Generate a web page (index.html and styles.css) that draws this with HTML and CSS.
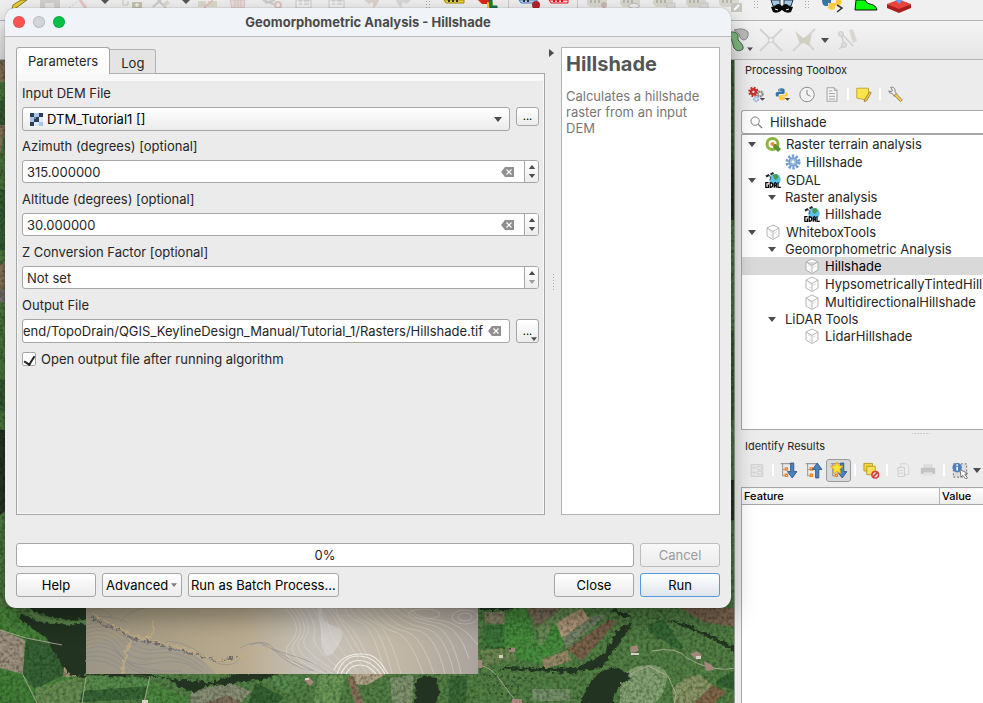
FILE: index.html
```html
<!DOCTYPE html>
<html lang="en">
<head>
<meta charset="utf-8">
<title>Geomorphometric Analysis - Hillshade</title>
<link rel="stylesheet" href="styles.css">
</head>
<body>
<svg class="defs" aria-hidden="true">
  <defs>
    <symbol id="down" viewBox="0 0 8 5"><path d="M0 0h8L4 5z" fill="#4c4c4c"/></symbol>
    <symbol id="up" viewBox="0 0 8 5"><path d="M0 5h8L4 0z" fill="#4c4c4c"/></symbol>
    <symbol id="clear" viewBox="0 0 13 10"><path d="M4 0h9v10H4L0 5z" fill="#8f8f8f"/><path d="M5.500 2.500l5 5m0-5l-5 5" stroke="#fff" stroke-width="1.200"/></symbol>
    <symbol id="cube" viewBox="0 0 16 16"><path d="M8 1l6 3v8l-6 3.500L2 12V4zM2 4l6 3.500L14 4M8 7.500v7" fill="#fff" stroke="#a2a2a2" stroke-width=".8"/><path d="M4 6.500l3 2m2 1l3-2m-6 3v2" fill="none" stroke="#ccc" stroke-width=".7"/></symbol>
    <symbol id="gdal" viewBox="0 0 16 16"><circle cx="10" cy="7.500" r="5.700" fill="#5bc4ee"/><path d="M8 3l4-1 2 3-3 3-2-1z" fill="#4d9a4a"/><path d="M1 4.500l3-1.500M5.500 2.500L8.500.8" stroke="#222" stroke-width="2"/><path d="M4 3l2 3-1 2" fill="none" stroke="#555"/><path d="M3.500 10.700H.8v4.600h2.700v-2.300h-1M5.200 10.700v4.600q2.600 0 2.600-2.300t-2.600-2.300zM9.300 15.800v-4.200l1-1 1 1v4.200M9.300 13.700h2M13 10.200v5.100h2.800" fill="none" stroke="#000" stroke-width="1.200"/></symbol>
    <symbol id="gear" viewBox="0 0 16 16"><circle cx="8" cy="8" r="6" fill="none" stroke="#6f9bd0" stroke-width="3" stroke-dasharray="2.300 1.470"/><circle cx="8" cy="8" r="4" fill="#9bbce4" stroke="#6f9bd0" stroke-width="1.500"/><circle cx="8" cy="8" r="1.400" fill="#fff"/></symbol>
    <symbol id="python" viewBox="0 0 16 16"><path d="M8 1c-3 0-4 1-4 2.500V5h4.500v.7H3C1.500 5.700 1 7 1 8.500S1.700 11 3 11h1.500V9.500Q4.500 8 6 8h4q1.700 0 1.700-1.700V3.500Q11.700 1 8 1z" fill="#3873a8"/><path d="M8.500 15.500c3 0 3.700-1 3.700-2.500v-1.500H8v-.7h5.500c1.500 0 2-1.300 2-2.600S15 5.800 13.500 5.800h-1V7.500q0 1.500-1.500 1.500H7Q5 9 5 11v2q0 2.500 3.500 2.500z" fill="#fdcb3c"/><circle cx="6" cy="3" r=".8" fill="#fff"/></symbol>
    <symbol id="arrowdown" viewBox="0 0 16 16"><path d="M9.500 1h3v8h3L11 15 6.500 9h3z" fill="#4d83bd" stroke="#275484" stroke-width=".8"/></symbol>
    <symbol id="arrowup" viewBox="0 0 16 16"><path d="M9.500 15h3V7h3L11 1 6.500 7h3z" fill="#4d83bd" stroke="#275484" stroke-width=".8"/></symbol>
    <symbol id="twig" viewBox="0 0 16 16"><path d="M0 1.500h12M2 2v11h2M2 7h2" fill="none" stroke="#999"/><path d="M4.500 5.500h2v2h-2zM4.500 11.500h2v2h-2z" fill="#fff" stroke="#f58220" stroke-width="1.300"/></symbol>
    <symbol id="fadedlabel" viewBox="0 0 24 14"><path d="M0 0h20v4l-3 3H3L0 4z" fill="#dbdad0"/><path d="M4 0v3m4-3v3m4-3v3" stroke="#b9b8ae" stroke-width="2"/></symbol>
    <symbol id="fadeddoc" viewBox="0 0 24 14"><path d="M4 0h15v8H4z" fill="#f1f1f1" stroke="#ccc"/><path d="M7 1h3m2 0h5M7 4h3m2 0h5" stroke="#c5c5c5"/></symbol>
  </defs>
</svg>
<div class="app">
  <div class="bar bar-top">
    <span class="slot"><svg class="cut" viewBox="0 0 24 14"><path d="M16 0h6L11 8l-4 1 1-4z" fill="#e9cf31" stroke="#8a7a2d"/></svg></span>
    <span class="slot"><svg class="cut" viewBox="0 0 24 14"><path d="M2 0h20v8H2z" fill="#d2d0ce"/><path d="M7 3h9v5H7z" fill="#e7e5e3"/></svg></span>
    <span class="slot mid"><svg class="cut" viewBox="0 0 24 14"><path d="M2 8L12 0" stroke="#ccc" stroke-dasharray="2 2"/><path d="M13 0l6 8" stroke="#e5c9c5" stroke-width="3"/></svg></span>
    <span class="slot mid"><svg class="cut" viewBox="0 0 24 14"><path d="M8 0h8l-4 4z" fill="#555"/></svg></span>
    <span class="slot mid"><svg class="cut" viewBox="0 0 24 14"><path d="M4 0v5h5V1" fill="#eee" stroke="#c9c9c0"/><rect x="13" y="2" width="10" height="7" fill="#c5c3ac"/><path d="M16 5h4m-2-2v4" stroke="#fff"/></svg></span>
    <span class="slot"><svg class="cut" viewBox="0 0 24 14"><path d="M4 7L12 0m-3 0l8 8" stroke="#ccc" stroke-width="2"/><path d="M13 4l5-4 3 3-5 4z" fill="#dddbcf"/></svg></span>
    <span class="slot small"><svg class="cut" viewBox="0 0 24 14"><path d="M8 0h8l-4 4z" fill="#555"/></svg></span>
    <span class="slot mid"><svg class="cut" viewBox="0 0 24 14"><path d="M2 1h8v6H2zm10 0h9v6h-9z" fill="#dcdacb"/><path d="M8 8l9-8" stroke="#e0c0bb" stroke-width="2"/></svg></span>
    <span class="slot"><svg class="cut" viewBox="0 0 24 14"><path d="M4 0h15l-1 8H6z" fill="#ecdedb" stroke="#dac8c5"/><path d="M9 0v7m3-7v7m3-7v7" stroke="#dac3c0"/></svg></span>
    <span class="slot"><svg class="cut" viewBox="0 0 24 14"><path d="M4 0l13 5M16 0L6 3" stroke="#ccc" stroke-width="2"/><circle cx="19" cy="5" r="3" fill="none" stroke="#dfc6c2" stroke-width="2"/></svg></span>
    <span class="slot"><svg class="cut"><use href="#fadeddoc"/></svg></span>
    <span class="slot"><svg class="cut"><use href="#fadeddoc"/></svg></span>
    <span class="slot"><svg class="cut" viewBox="0 0 24 14"><path d="M6 0h15q-1 5-6 8 1-4-1-6l-3 2z" fill="#dcd3ce"/></svg></span>
    <span class="slot"><svg class="cut" viewBox="0 0 24 14"><path d="M20 0H5q1 5 6 8-1-4 1-6l3 2z" fill="#d8d9d4"/></svg></span>
    <span class="slot small"><i class="grip"></i></span>
    <span class="slot"><svg class="cut" viewBox="0 0 24 14"><path d="M2 0h20v3H4z" fill="#f6d92a" stroke="#a08a18"/><path d="M7 0v2m4-2v2m4-2v2" stroke="#333" stroke-width="2"/></svg></span>
    <span class="slot"><svg class="cut" viewBox="0 0 24 14"><path d="M3 0h11v4H7z" fill="#e12619"/><path d="M12 2h6v7h-6z" fill="#f6cf25"/><path d="M14 0h3v6h5v2h-7z" fill="#138c43" stroke="#165"/></svg></span>
    <span class="sep"></span>
    <span class="slot"><svg class="cut" viewBox="0 0 24 14"><path d="M1 0h18v3H3z" fill="#b5d4f4" stroke="#4b82bd"/><path d="M6 0v2m4-2v2" stroke="#333" stroke-width="2"/><circle cx="18" cy="5" r="4" fill="#b0252b"/></svg></span>
    <span class="slot mid"><svg class="cut" viewBox="0 0 24 14"><path d="M2 0h19v3H4z" fill="#fdd" stroke="#e12"/><path d="M7 0v2m4-2v2m4-2v2" stroke="#e12" stroke-width="2"/></svg></span>
    <span class="sep"></span>
    <span class="slot"><svg class="cut"><use href="#fadedlabel"/><circle cx="17" cy="5" r="3" fill="#cdb8b5"/></svg></span>
    <span class="slot"><svg class="cut"><use href="#fadedlabel"/><path d="M8 6q6-6 12 0-6 5-12 0z" fill="#eee" stroke="#bbb"/></svg></span>
    <span class="slot"><svg class="cut"><use href="#fadedlabel"/><path d="M14 3h8v6h-8z" fill="#ddd" stroke="#ccc"/></svg></span>
    <span class="slot"><svg class="cut"><use href="#fadedlabel"/><path d="M14 3h8v6h-8z" fill="#ddd" stroke="#ccc"/></svg></span>
    <span class="slot"><svg class="cut"><use href="#fadedlabel"/><path d="M12 3h11v9H12z" fill="#c8c7c0"/><path d="M15 10l5-5" stroke="#fff" stroke-width="2"/></svg></span>
    <span class="slot small"><i class="grip"></i></span>
    <span class="slot"><svg class="cut" viewBox="0 0 24 14"><path d="M1 0h9v6H3zm13 0h9l-2 6h-7z" fill="#a5c6e3" stroke="#26333f"/><path d="M12 6q4-4 7 0l4 1-2 5q-5 2-9-2-4 4-9 2L1 7l4-1q3-4 7 0z" fill="#090909"/><path d="M5 9l3 1m8 0l3-1" stroke="#fff"/></svg></span>
    <span class="slot small"><i class="grip"></i></span>
    <span class="slot"><svg class="cut" viewBox="0 0 24 14"><path d="M1 0h9v3H7v3H4Q1 5 1 0z" fill="#3873a8"/><path d="M8 3h7V0h5q2 3-1 5h-5v4q-5 2-7-1z" fill="#fdcb3c"/><path d="M16 5l5 3-5 4" fill="none" stroke="#333" stroke-width="1.500"/></svg></span>
    <span class="slot"><svg class="cut" viewBox="0 0 24 14"><path d="M2 0h9q2 4 5 4 6 1 7 6H1z" fill="#0f0" stroke="#111"/></svg></span>
    <span class="slot"><svg class="cut" viewBox="0 0 24 14"><path d="M0 4l12 4 12-4v4l-12 5L0 8z" fill="#a91f1c"/><path d="M0 4l8-3h8l8 3-12 5z" fill="#e8443c"/><path d="M8 0h8l-4 4z" fill="#6f9be6"/></svg></span>
  </div>
  <div class="bar bar-edit">
    <span class="slot"><svg class="tool" viewBox="0 0 24 24"><path d="M8 2q10-3 14 2 1 8-5 8-4-2-4-6z" fill="#b9bbb9" stroke="#888"/><path d="M2 5Q9 2 12 7l0 5q6 5 5 9-5 4-9-1L6 13z" fill="#84b984" stroke="#3f6b43"/></svg><svg class="corner" viewBox="0 0 8 5"><use href="#down"/></svg></span>
    <span class="slot"><svg class="tool" viewBox="0 0 24 24"><path d="M1 1l22 22M23 1L1 23" stroke="#d3d3d3" stroke-width="2"/><circle cx="12" cy="12" r="2.500" fill="#eee" stroke="#ccc"/></svg></span>
    <span class="slot"><svg class="tool" viewBox="0 0 24 24"><path d="M1 23L23 1M14 13l8 9" stroke="#d5d5d2" stroke-width="2"/><path d="M3 3l8 7 9-4-3 12-5-3-4 1z" fill="#d0cfc2"/></svg></span>
    <span class="slot arrow"><svg class="tri" viewBox="0 0 8 5"><use href="#down"/></svg></span>
    <span class="slot"><svg class="tool" viewBox="0 0 24 24"><path d="M4 21L9 17 6 5l12 13" fill="none" stroke="#d0d0d0" stroke-width="1.500"/><circle cx="6" cy="6" r="2.500" fill="#ddd" stroke="#ccc"/><circle cx="9" cy="17" r="2.500" fill="#ddd" stroke="#ccc"/><path d="M14 2l4-1 4 12-4 2z" fill="#d9d8ce"/></svg></span>
  </div>
  <div class="workspace">
    <div class="map">
      <svg viewBox="0 60 734 643" preserveAspectRatio="xMidYMax slice" role="img" aria-label="Aerial map with terrain overlay">
        <defs>
          <filter id="grain" x="0" y="0" width="1" height="1" color-interpolation-filters="sRGB"><feTurbulence type="fractalNoise" baseFrequency=".3" numOctaves="3" seed="4" result="n"/><feColorMatrix in="n" values="0 0 0 0 0  0 0 0 0 .05  0 0 0 0 0  .8 0 0 0 -.3"/><feComposite in2="SourceGraphic" operator="in" result="g"/><feMerge><feMergeNode in="SourceGraphic"/><feMergeNode in="g"/></feMerge></filter>
          <filter id="rough" color-interpolation-filters="sRGB"><feTurbulence type="fractalNoise" baseFrequency=".22" numOctaves="2" seed="8"/><feDisplacementMap in="SourceGraphic" scale="7" xChannelSelector="R" yChannelSelector="G"/></filter>
          <linearGradient id="dtm"><stop offset="0" stop-color="#a0967f"/><stop offset=".4" stop-color="#b9ab8f"/><stop offset=".58" stop-color="#c6c2bb"/><stop offset=".78" stop-color="#c3b9a8"/><stop offset="1" stop-color="#aaa39c"/></linearGradient>
          <clipPath id="dtmclip"><path d="M86 590h392v84H86z"/></clipPath>
        </defs>
        <g filter="url(#grain)">
          <path d="M0 60h734v643H0z" fill="#537f45"/>
          <path d="M0 60h6v22H0zM0 125h6l-6 30zM0 265l6-5v25l-6 8z" fill="#8d7b60"/>
          <path d="M0 100h6v25H0zM0 190h6v60H0zM0 380h6v30H0z" fill="#3d6638"/>
          <path d="M0 290h6v12H0z" fill="#817a75"/>
          <path d="M0 430h6v80l-6 5z" fill="#2a3a27"/>
          <path d="M0 608h16l10 15 40 18 18 33-35 14-14 15H0z" fill="#4b873d"/>
          <path d="M0 630l25 10-2 34-23-6z" fill="#a09281"/>
          <path d="M26 638l36 7 3 30-31 14-11-15z" fill="#386336"/>
          <path d="M65 658l18 18-20 1z" fill="#a59a76"/>
          <path d="M0 670l23 5 13 28H0z" fill="#437f38"/>
          <path d="M35 688l48-12-2 27H36z" fill="#678c51"/>
          <path d="M87 676l62 2-4 12-63 8z" fill="#578b4b"/>
          <path d="M82 691l66-5-4 13-64 3z" fill="#386635"/>
          <path d="M148 680l18 10 24 8-6 5h-40z" fill="#4c883f"/>
          <path d="M192 690l40-7 20 9-12 11h-50z" fill="#888e73"/>
          <path d="M205 703l22-8 15 8z" fill="#7c6d59"/>
          <path d="M256 683l28 14-6 6h-30z" fill="#356232"/>
          <path d="M262 676l38 0-10 18z" fill="#5a8b50"/>
          <path d="M318 675h29l-9 28h-24z" fill="#6b9757"/>
          <path d="M350 674l36 0-19 11-15-1z" fill="#b2a388"/>
          <path d="M347 678l6-2 11 27h-9z" fill="#887157"/>
          <path d="M390 678l24-3-2 28h-20z" fill="#7f936d"/>
          <path d="M450 676h17l-1 27h-18z" fill="#3a6735"/>
          <path d="M485 612h20l-1 12-19-1z" fill="#8c866c"/>
          <path d="M484 625h21v25l-25 5z" fill="#3e773a"/>
          <path d="M506 611l20-3 10 37-32 6z" fill="#488e3e"/>
          <path d="M526 608h35l-24 19z" fill="#7e705b"/>
          <path d="M537 627l23-17 4-2h15l-27 36-13 1z" fill="#6b8d57"/>
          <path d="M515 650l29-6 10-22 12 20-22 22-28-4z" fill="#488e3e"/>
          <path d="M556 623l26-15 10 15-30 15z" fill="#b59b7d"/>
          <path d="M562 638l31-22 15-2-42 35z" fill="#78876a"/>
          <path d="M608 620l10 0-36 41-15-12z" fill="#7a624b"/>
          <path d="M542 659l26-9 3 11-27 8z" fill="#968a69"/>
          <path d="M480 650l34-3v12l-30 8z" fill="#6c8651"/>
          <path d="M532 689h38v12h-38z" fill="#748f67"/>
          <path d="M648 625l15-6 20 28-3 3-32-18z" fill="#386a37"/>
          <path d="M620 678l12-10q26-8 35 5 0 20-12 30h-35z" fill="#85a272"/>
          <path d="M672 690q10-14 28-15l13 11-14 17h-25z" fill="#899666"/>
          <path d="M694 703l18-18 14 7-12 11z" fill="#806649"/>
          <path d="M717 680l17-9v19l-18-5z" fill="#356333"/>
          <path d="M680 608h54v19l-30-5z" fill="#7f6853"/>
          <path d="M730 60h4v100h-4zM730 330h4v90h-4z" fill="#3f6438"/>
          <path d="M730 160h4v60h-4zM730 480h4v40h-4z" fill="#2b3a26"/>
        </g>
        <path d="M30 612q18 14 56 10" fill="none" stroke="#5b844a" stroke-width="3"/>
        <g filter="url(#rough)" fill="#223321">
          <path d="M14 600h74v18q-30 5-52-6zM18 611q24 18 68 12v56l-19-6-20-34-24-17z"/>
          <path d="M83 672h62l18 6 22 2 28 3 25-10h40l-10 5-32 5-30 3-12 7-15-6-15-10-61-1z"/>
          <path d="M416 680q11-8 21 0l2 16-6 9h-18zM580 703q10-24 26-34 14-4 26 9-18 8-20 28z"/>
          <path d="M480 606h38l-10 4h-28z"/>
          <path d="M612 608l22 9 30 2 20 7 30 14 20 12v-5l-24-12-24-11-28-6-38-1-8-9zM577 668l26-14 17-27 13-4-21 30-10 14-28 6-40-2-33-2v-2l36 1z"/>
        </g>
        <path d="M0 630l26 8 36 7m-39 30l14 28m49-26l-4 26m68-27l-6 27M478 665q14 2 22 15l17 23m113-29l18-8 20 10 8 18-4 19m-20-62q25-5 35 7 25 15 50 10l10 10" fill="none" stroke="#b6b39d" stroke-width=".8"/>
        <g fill="#a08779"><path d="M509 648h6v4h-6zM478 660h4v8h-4zM630 647l7-2 2 6-8 2zM690 654l7-3 5 4-5 5zM704 661l8 4 2 5-8 1zM304 680l5-3 5 5-4 4zM512 699h10v4h-10z"/></g>
        <g fill="#d7d0c8"><path d="M499 655h4v3h-4zM631 653h8v2h-8zM696 656h5v3h-5zM305 678h4v2h-4zM142 700h6v3h-6z"/></g>
        <path d="M485 647l28 2m-30 26l52 4m-48 6l34 2m-32 6l26 2" fill="none" stroke="#2c452a" stroke-width="1.500" stroke-dasharray="2 4"/>
        <g clip-path="url(#dtmclip)">
          <path d="M86 590h392v84H86z" fill="url(#dtm)"/>
          <path d="M86 650q30-22 75-5 40 8 55 29H86z" fill="#9a968d" opacity=".5"/>
          <g fill="none" stroke="#858588" stroke-width=".5">
            <path d="M86 625q22-8 40 8t35 10 42 12 37 3M86 629q22-8 38 8t36 12 45 14M86 633q22-8 36 8t36 12 45 15M86 637q22-8 34 9t37 12 45 14M86 641q22-8 32 10t38 12 42 8M86 645q22-8 34 10t62 16M86 649q22-8 38 10t62 15M86 653q22-6 38 10t50 12M86 657q22-5 42 14M86 661q20-4 38 12M88 618q22-5 40 5M88 611q15-5 24 5M120 622q10-12 25-14M240 648q20-12 35 3t36 20M250 645q15-6 22 2t42 24M262 645q20 8 35 12t30 15"/>
          </g>
          <g fill="none" stroke="#e4e1d9" stroke-width=".6" opacity=".75">
            <path d="M285 608q20 20 5 35t27 31M290 608q18 20 5 34t31 32M295 608q16 20 5 32t33 34M300 608q14 20 5 30t36 36M306 608q12 18 8 28t32 38M313 608q10 16 9 26t31 40M320 608q8 12 9 20t30 46M327 608q8 10 12 18t28 48M331 608q6 8 12 16t30 50M336 608q0 8 10 15t30 51M345 608q2 10 15 14t25 52M350 608q5 10 18 15t24 51M357 608q8 10 20 16t24 50M365 608q15 20 30 24t28 42M372 608q15 20 32 23t30 43M380 608q15 20 35 22t30 44M388 608q15 16 36 20t30 46M395 608q15 14 36 17t30 49M403 608q12 12 34 15t32 36M410 608q5 10 28 12t40 25"/>
            <ellipse cx="465" cy="617" rx="7" ry="4"/><ellipse cx="465" cy="617" rx="13" ry="7"/><ellipse cx="424" cy="614" rx="16" ry="5"/>
          </g>
          <path d="M337 674q8-24 32-16 9 4 16 16M341 674q8-18 26-12 7 3 14 12M346 674q6-12 20-8 5 2 10 8M334 670q10-20 36-15 9 3 18 19" fill="none" stroke="#edebe5" stroke-width="1.200"/>
          <path d="M322 608q-2 14 12 18t4 20-14 6-3-14-4-30z" fill="#e2e1df" opacity=".45"/>
          <g fill="none" filter="url(#rough)">
            <path d="M92 617l12 8 14 4 13 10 25 4 18 7 28 6 18 5 18-4" stroke="#6f6b6b" stroke-width="2" stroke-dasharray="4 1 6 3"/>
            <path d="M131 640q-8 18-8 36" stroke="#b9a781" stroke-width="3"/>
            <path d="M133 637q45 8 70 18t38 2 30-10M93 614q24 15 45 22t14-16" stroke="#c6af83" stroke-width="1.200"/>
          </g>
        </g>
      </svg>
    </div>
    <aside class="dock">
      <section class="toolbox">
        <h2 class="dock-title">Processing Toolbox</h2>
        <div class="icons">
          <button class="ib" aria-label="Models"><svg viewBox="0 0 20 18"><circle cx="6" cy="6" r="4.500" fill="none" stroke="#c9302c" stroke-width="2.500" stroke-dasharray="2 1.500"/><circle cx="6" cy="6" r="2.700" fill="none" stroke="#c9302c" stroke-width="2.800"/><circle cx="13.500" cy="8.500" r="2.700" fill="#eee" stroke="#888" stroke-width="2.500" stroke-dasharray="2 .6"/><circle cx="9" cy="14" r="2.300" fill="#eee" stroke="#9cb7dd" stroke-width="2.500" stroke-dasharray="2 .6"/><path d="M13 13h6l-3 3z" fill="#4c4c4c"/></svg></button>
          <button class="ib" aria-label="Scripts"><svg viewBox="0 0 20 18"><use href="#python" x="2" y="1" width="15" height="15"/><path d="M13 13h6l-3 3z" fill="#4c4c4c"/></svg></button>
          <button class="ib" aria-label="History"><svg viewBox="0 0 20 18"><circle cx="10" cy="9" r="8" fill="#f3f3f3" stroke="#808080"/><path d="M10 4v5l4 2" fill="none" stroke="#777"/></svg></button>
          <button class="ib" aria-label="Results"><svg viewBox="0 0 20 18"><path d="M4.500 1.500h8l3 3v12h-11z" fill="#f7f7f7" stroke="#999"/><path d="M12.500 1.500v3h3M6.500 5h4m-4 3h7m-7 3h7m-7 3h7" fill="none" stroke="#999"/></svg></button>
          <span class="split"></span>
          <button class="ib" aria-label="Edit in place"><svg viewBox="0 0 20 18"><path d="M2 2h13v10l-3 3-10-2z" fill="#fbe44c" stroke="#bda22c"/><path d="M16 6l2 1-5 9-3 1 1-3z" fill="#efc13e" stroke="#7d6a38" stroke-width=".7"/></svg></button>
          <span class="split"></span>
          <button class="ib" aria-label="Options"><svg viewBox="0 0 20 18"><path d="M2 5l3 1 1-2-2-3q4-1 5 3v2l2 2-3 3-2-3q-4 0-4-3z" fill="#eee" stroke="#777"/><path d="M10 8l7 7-2 2-7-7z" fill="#f1cc5b" stroke="#9b7d33"/></svg></button>
        </div>
        <label class="search"><svg viewBox="0 0 14 14"><circle cx="5.500" cy="5.500" r="4.500" fill="none" stroke="#777"/><path d="M9 9l4 4" stroke="#777" stroke-width="1.400"/></svg><input type="text" value="Hillshade" aria-label="Search algorithms"></label>
        <ul class="tree">
          <li class="row"><svg class="tri"><use href="#down"/></svg><svg class="ic" viewBox="0 0 16 16"><circle cx="7.500" cy="8" r="5.500" fill="none" stroke="#8cb43a" stroke-width="3"/><path d="M8 8h3l5 5-3 3-5-5z" fill="#5f9030"/><circle cx="7.500" cy="8" r="2" fill="#ef8b32"/></svg>Raster terrain analysis</li>
          <li class="row leaf1"><svg class="ic"><use href="#gear"/></svg>Hillshade</li>
          <li class="row"><svg class="tri"><use href="#down"/></svg><svg class="ic"><use href="#gdal"/></svg>GDAL</li>
          <li class="row group"><svg class="tri"><use href="#down"/></svg>Raster analysis</li>
          <li class="row leaf2"><svg class="ic"><use href="#gdal"/></svg>Hillshade</li>
          <li class="row"><svg class="tri"><use href="#down"/></svg><svg class="ic"><use href="#cube"/></svg>WhiteboxTools</li>
          <li class="row group"><svg class="tri"><use href="#down"/></svg>Geomorphometric Analysis</li>
          <li class="row leaf2 selected"><svg class="ic"><use href="#cube"/></svg>Hillshade</li>
          <li class="row leaf2"><svg class="ic"><use href="#cube"/></svg>HypsometricallyTintedHillshade</li>
          <li class="row leaf2"><svg class="ic"><use href="#cube"/></svg>MultidirectionalHillshade</li>
          <li class="row group"><svg class="tri"><use href="#down"/></svg>LiDAR Tools</li>
          <li class="row leaf2"><svg class="ic"><use href="#cube"/></svg>LidarHillshade</li>
        </ul>
      </section>
      <div class="dock-handle"></div>
      <section class="identify">
        <h2 class="dock-title">Identify Results</h2>
        <div class="icons">
          <button class="ib" aria-label="Form view" disabled><svg viewBox="0 0 20 18"><path d="M3.500 2.500h13v13h-13z" fill="#e5e5e5" stroke="#ccc"/><path d="M5 6h4m-4 5h4" stroke="#ccc"/><path d="M11 5h4v3h-4zm0 5h4v3h-4z" fill="#eee" stroke="#ccc"/></svg></button>
          <span class="split"></span>
          <button class="ib" aria-label="Expand tree"><svg viewBox="0 0 16 16"><use href="#twig"/><use href="#arrowdown"/></svg></button>
          <button class="ib" aria-label="Collapse tree"><svg viewBox="0 0 16 16"><use href="#twig"/><use href="#arrowup"/></svg></button>
          <button class="ib on" aria-label="Expand new results"><svg viewBox="0 0 16 16"><use href="#twig"/><use href="#arrowdown"/><path d="M6 0l1.800 3.500 4 .5-3 2.800.8 4L6 9l-3.600 1.800.8-4L0 4l4-.5z" fill="#ffe437" stroke="#eda21a" stroke-width=".8"/></svg></button>
          <span class="split"></span>
          <button class="ib" aria-label="Clear results"><svg viewBox="0 0 18 18"><path d="M1.500 1.500h9v8h-9z" fill="#f5d63c" stroke="#b79923"/><path d="M4.500 4.500h9v9h-9z" fill="#fbe255" stroke="#b79923"/><circle cx="13.500" cy="13.500" r="3.500" fill="#fbdcda" stroke="#d33b37" stroke-width="1.600"/><path d="M11 16l5-5" stroke="#d33b37" stroke-width="1.600"/></svg></button>
          <span class="split"></span>
          <button class="ib" aria-label="Copy" disabled><svg viewBox="0 0 20 18"><path d="M7.500 1.500h6l3 3v9h-9z" fill="#eee" stroke="#d0d0d0"/><path d="M4.500 5.500h7v10h-7z" fill="#eee" stroke="#c8c8c8"/><path d="M6 9h4m-4 3h4" stroke="#ccc"/></svg></button>
          <button class="ib" aria-label="Print" disabled><svg viewBox="0 0 20 18"><path d="M5 2h10v5H5z" fill="#ddd"/><path d="M2 7q0-1 1-1h14q1 0 1 1v6H2z" fill="#c4c4c4"/><path d="M5 11h10v4H5z" fill="#e4e4e4"/></svg></button>
          <span class="split"></span>
          <button class="ib" aria-label="Identify features"><svg viewBox="0 0 18 18"><path d="M2 2h14v14H2z" fill="#ddd" stroke="#666" stroke-dasharray="2 2"/><circle cx="6" cy="6" r="5" fill="#4b81bd"/><path d="M6 5v4M6 2.500v1.500" stroke="#fff" stroke-width="1.700"/><path d="M9 8l8 4-3 1 3 4-2 1-3-4-2 2z" fill="#fff" stroke="#555" stroke-width=".8"/></svg></button>
          <svg class="tri more"><use href="#down"/></svg>
        </div>
        <table class="results"><thead><tr><th>Feature</th><th>Value</th></tr></thead></table>
        <div class="results-body"></div>
      </section>
    </aside>
  </div>
</div>

<main class="dialog" role="dialog" aria-labelledby="dlg-title">
  <header class="titlebar">
    <span class="lights"><i class="red"></i><i class="gray"></i><i class="green"></i></span>
    <h1 id="dlg-title">Geomorphometric Analysis - Hillshade</h1>
  </header>
  <div class="dialog-body">
    <div class="columns">
      <div class="left">
        <div class="tabs" role="tablist"><button class="tab active" role="tab" aria-selected="true">Parameters</button><button class="tab" role="tab">Log</button></div>
        <div class="pane">
          <form class="form">
            <div class="field">
              <label for="dem">Input DEM File</label>
              <div class="control">
                <div class="combo"><svg class="raster" viewBox="0 0 13 13"><path d="M0 0h13v13H0z" fill="#a9c4e6"/><path d="M0 0h4v4H0zM9 0h4v4H9zM0 9h4v4H0zM4 4h5v5H4z" fill="#2d3f57"/><path d="M4 9h5v4H4zM9 4h4v5H9z" fill="#dce9f7"/><path d="M4 4h2v2H4z" fill="#6d88ab"/></svg><select id="dem"><option>DTM_Tutorial1 []</option></select><svg class="tri"><use href="#down"/></svg></div>
                <button type="button" class="btn dots">...</button>
              </div>
            </div>
            <div class="field">
              <label for="az">Azimuth (degrees) [optional]</label>
              <div class="control"><div class="spin"><input id="az" type="text" value="315.000000"><button type="button" class="clear" aria-label="Clear azimuth"><svg><use href="#clear"/></svg></button><span class="steps"><svg><use href="#up"/></svg><svg><use href="#down"/></svg></span></div></div>
            </div>
            <div class="field">
              <label for="alt">Altitude (degrees) [optional]</label>
              <div class="control"><div class="spin"><input id="alt" type="text" value="30.000000"><button type="button" class="clear" aria-label="Clear altitude"><svg><use href="#clear"/></svg></button><span class="steps"><svg><use href="#up"/></svg><svg><use href="#down"/></svg></span></div></div>
            </div>
            <div class="field">
              <label for="z">Z Conversion Factor [optional]</label>
              <div class="control"><div class="spin"><input id="z" type="text" value="Not set"><span class="steps min"><svg><use href="#up"/></svg><svg><use href="#down"/></svg></span></div></div>
            </div>
            <div class="field">
              <label for="out">Output File</label>
              <div class="control">
                <div class="path"><input id="out" type="text" value="end/TopoDrain/QGIS_KeylineDesign_Manual/Tutorial_1/Rasters/Hillshade.tif"><button type="button" class="clear" aria-label="Clear output"><svg><use href="#clear"/></svg></button></div>
                <button type="button" class="btn dots tall">...<svg class="corner"><use href="#down"/></svg></button>
              </div>
            </div>
            <label class="check"><input type="checkbox" checked>Open output file after running algorithm</label>
          </form>
        </div>
      </div>
      <div class="splitter"><svg viewBox="0 0 5 8"><path d="M0 0v8l5-4z" fill="#4c4c4c"/></svg><i></i></div>
      <article class="help"><h2>Hillshade</h2><p>Calculates a hillshade raster from an input DEM</p></article>
    </div>
    <footer class="footer">
      <div class="line"><div class="progress" role="progressbar" aria-valuenow="0">0%</div><button class="btn" disabled>Cancel</button></div>
      <div class="line"><button class="btn">Help</button><button class="btn adv">Advanced<svg><use href="#down"/></svg></button><button class="btn batch">Run as Batch Process...</button><span class="grow"></span><button class="btn">Close</button><button class="btn primary">Run</button></div>
    </footer>
  </div>
</main>
</body>
</html>
```
FILE: styles.css
```css
* { box-sizing: border-box; }
html, body { height: 100%; }
body { margin: 0; overflow: hidden; font: 13px/16px Inter, "Liberation Sans", sans-serif; color: #262626; background: #ececec; }
button, input, select { font: inherit; color: inherit; margin: 0; padding: 0; border: 0; background: none; min-width: 0; }
h1, h2, p, ul { margin: 0; padding: 0; }
svg { display: block; flex: none; }
.defs { position: absolute; width: 0; height: 0; }
.tri { width: 8px; height: 5px; }

/* main window */
.app { display: flex; flex-direction: column; height: 100%; }
.bar { display: flex; flex: none; overflow: hidden; border-bottom: 1px solid #b4b4b4; background: linear-gradient(#f4f4f4, #e6e6e6); }
.bar-top { height: 21px; background: #f0f0f0; }
.bar-edit { height: 39px; align-items: center; justify-content: flex-end; padding-right: 120px; }
.slot { display: flex; flex: none; justify-content: center; width: 33px; position: relative; }
.slot.mid { width: 26px; }
.slot.small { width: 18px; }
.slot.arrow { width: 10px; }
.cut { width: 24px; height: 14px; }
.tool { width: 24px; height: 24px; }
.sep { flex: none; width: 10px; height: 10px; background: linear-gradient(#ccc, #ccc) center / 1px 100% no-repeat; }
.grip { width: 6px; height: 9px; background: radial-gradient(circle, #aaa 1px, transparent 1px) 0 0 / 3px 3px; }
.corner { position: absolute; right: 1px; bottom: 1px; width: 6px; height: 4px; }
.workspace { display: flex; flex: 1; min-height: 0; }
.map { flex: 1; min-width: 0; overflow: hidden; }
.map svg { width: 100%; height: 100%; }

/* docks */
.dock { display: flex; flex-direction: column; flex: none; width: 249px; padding-left: 6px; border-left: 1px solid #999; background: #ececec; }
.dock-title { font-size: 11px; font-weight: 400; line-height: 18px; padding: 1px 4px; }
.toolbox { display: flex; flex-direction: column; flex: none; height: 370px; }
.icons { display: flex; flex: none; align-items: center; height: 28px; padding-left: 3px; overflow: hidden; }
.ib { display: flex; flex: none; align-items: center; justify-content: center; width: 25px; height: 23px; border-radius: 3px; }
.ib svg { width: 18px; height: 17px; }
.ib.on { border: 1px solid #9b9b9b; background: #d8d8d8; }
.split { flex: none; width: 7px; height: 12px; background: linear-gradient(#fff, #fff) center / 2px 100% no-repeat; }
.more { margin-left: 1px; }
.search { display: flex; flex: none; align-items: center; gap: 7px; height: 24px; margin-top: 2px; padding-left: 8px; border: 1px solid #a6a6a6; border-right: 0; border-radius: 3px 0 0 3px; background: #fff; }
.search svg { width: 13px; height: 13px; }
.search input { flex: 1; }
.tree { flex: 1; min-height: 0; overflow: hidden; list-style: none; border: 1px solid #a6a6a6; border-right: 0; background: #fff; }
.row { display: flex; align-items: center; height: 18px; padding-left: 6px; white-space: nowrap; }
.row .tri { margin-right: 9px; }
.ic { width: 16px; height: 16px; margin-right: 5px; }
.row.group { height: 16px; padding-left: 26px; }
.row.leaf1 { padding-left: 43px; }
.row.leaf2 { padding-left: 62px; }
.row.selected { background: #d9d9d9; color: #000; }
.dock-handle { flex: none; height: 6px; background: radial-gradient(circle, #aaa 1px, transparent 1px) center / 3px 3px repeat-x; width: 18px; align-self: center; margin-left: 118px; }
.identify { display: flex; flex-direction: column; flex: 1; min-height: 0; }
.identify .icons { margin-bottom: 3px; }
.results { width: 100%; border-collapse: collapse; border: 1px solid #a6a6a6; border-right: 0; font-size: 11px; color: #000; }
.results th { height: 17px; padding: 0 2px; text-align: left; font-weight: 500; line-height: 15px; border-bottom: 1px solid #a6a6a6; background: linear-gradient(#fff, #ececec); }
.results th:first-child { width: 198px; border-right: 1px solid #b4b4b4; }
.results-body { flex: 1; border-left: 1px solid #a6a6a6; background: #fff; }

/* dialog */
.dialog { position: absolute; inset: 8px 252px 95px 5px; display: flex; flex-direction: column; border-radius: 11px; background: #ececec; box-shadow: 0 0 1px rgba(0,0,0,.6), 0 10px 24px rgba(0,0,0,.35); }
.titlebar { position: relative; flex: none; display: flex; align-items: center; justify-content: center; height: 29px; border-radius: 11px 11px 0 0; border-bottom: 1px solid #bcbcbc; background: #f0f4f8; }
.titlebar h1 { font-size: 13px; line-height: 16px; font-weight: 700; color: #4a4a4a; }
.lights { position: absolute; left: 8px; top: 8px; display: flex; gap: 8px; }
.lights i { width: 12px; height: 12px; border-radius: 50%; border: 1px solid rgba(0,0,0,.12); }
.red { background: #ff5350; }
.gray { background: #d2d5d9; }
.green { background: #06c144; }
.dialog-body { flex: 1; min-height: 0; display: flex; flex-direction: column; padding: 10px 11px 11px; }
.columns { flex: 1; min-height: 0; display: flex; }
.left { flex: 1; min-width: 0; display: flex; flex-direction: column; }
.tabs { display: flex; align-items: flex-end; height: 27px; margin-bottom: -1px; position: relative; }
.tab { height: 25px; padding: 2px 11px 0; border: 1px solid #b4b4b4; border-left: 0; border-radius: 0 3px 0 0; background: #e4e4e4; }
.tab.active { height: 27px; padding: 0 11px; border: 1px solid #a6a6a6; border-bottom: 0; border-radius: 3px 3px 0 0; background: linear-gradient(#fff, #fafafa); }
.pane { flex: 1; min-height: 0; padding: 7px 1px 1px; border: 1px solid #a6a6a6; background: #f8f8f8; }
.form { height: 100%; padding: 4px 4px 0; background: #ebebeb; display: flex; flex-direction: column; gap: 7px; }
.field { display: flex; flex-direction: column; gap: 6px; }
.field label { height: 16px; }
.control { display: flex; align-items: flex-start; gap: 6px; height: 24px; }
.combo, .path, .spin { position: relative; flex: 1; min-width: 0; display: flex; align-items: center; height: 24px; border: 1px solid #a6a6a6; border-radius: 3px; background: #fff; }
.spin { height: 23px; }
.combo { background: linear-gradient(#fff, #ececec); padding: 0 7px; gap: 4px; color: #000; }
.combo select { flex: 1; appearance: none; outline: 0; }
.raster { width: 13px; height: 13px; }
.spin input { flex: 1; padding-left: 4px; }
.path input { flex: 1; }
.clear { flex: none; margin-right: 10px; }
.clear svg { width: 13px; height: 10px; }
.path .clear { margin-right: 8px; }
.steps { flex: none; align-self: stretch; width: 14px; display: flex; flex-direction: column; align-items: center; justify-content: center; gap: 5px; border-left: 1px solid #a6a6a6; border-radius: 0 2px 2px 0; background: linear-gradient(#fff, #ececec); }
.steps svg { width: 8px; height: 4px; }
.min svg:last-child { opacity: .5; }
.btn { flex: none; width: 80px; height: 24px; border: 1px solid #a6a6a6; border-radius: 3px; background: linear-gradient(#fff, #ececec); color: #000; }
.btn:disabled { color: #9b9b9b; border-color: #bcbcbc; background: linear-gradient(#f8f8f8, #ececec); }
.btn.primary { border-color: #549ae0; background: linear-gradient(#fff, #dfe5ec); }
.btn.dots { position: relative; width: 23px; height: 19px; font-size: 11px; line-height: 11px; }
.btn.dots.tall { height: 24px; }
.btn.adv { display: flex; align-items: center; justify-content: space-between; padding: 0 4px 0 3px; }
.adv svg { width: 6px; height: 4px; opacity: .7; }
.btn.batch { width: auto; padding: 0 2px; }
.check { display: flex; align-items: center; gap: 5px; margin-top: 1px; }
.check input { appearance: none; width: 14px; height: 14px; border: 1px solid #a6a6a6; border-radius: 2px; background: #fff; display: flex; justify-content: center; align-items: flex-start; padding-top: 1px; }
.check input:checked::before { content: ""; width: 5px; height: 9px; border: solid #222; border-width: 0 2px 2px 0; transform: rotate(32deg); }
.splitter { flex: none; width: 16px; display: flex; flex-direction: column; align-items: center; justify-content: space-between; }
.splitter svg { width: 5px; height: 8px; margin-top: 2px; margin-right: 4px; }
.splitter i { width: 1px; height: 16px; margin-bottom: 225px; background: repeating-linear-gradient(#aaa 0 1px, transparent 1px 3px); }
.help { flex: none; width: 159px; padding: 5px 4px; border: 1px solid #b4b4b4; background: #fff; color: #777; }
.help h2 { font-size: 20px; line-height: 22px; font-weight: 700; color: #555; margin-bottom: 13px; }
.footer { flex: none; display: flex; flex-direction: column; gap: 6px; padding-top: 28px; }
.line { display: flex; gap: 6px; }
.progress { flex: 1; height: 24px; border: 1px solid #a6a6a6; border-radius: 3px; background: #fff; text-align: center; line-height: 23px; }
.grow { flex: 1; }
```
